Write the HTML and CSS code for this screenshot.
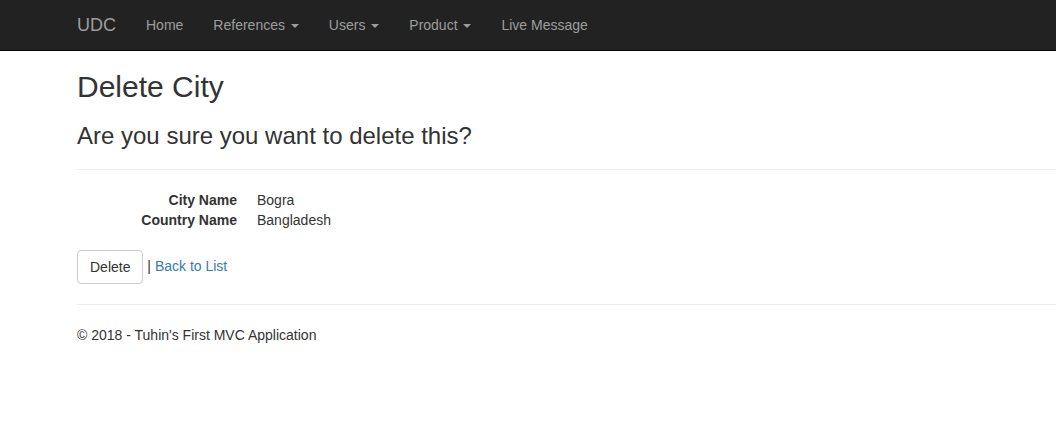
FILE: index.html
```html
<!DOCTYPE html>
<html>
<head>
<meta charset="utf-8">
<title>Delete - UDC</title>
<link rel="stylesheet" href="styles.css">
</head>
<body>
<div class="navbar">
  <div class="container nav-container">
    <a class="brand" href="#">UDC</a>
    <ul class="nav">
      <li><a href="#">Home</a></li>
      <li><a href="#">References <span class="caret"></span></a></li>
      <li><a href="#">Users <span class="caret"></span></a></li>
      <li><a href="#">Product <span class="caret"></span></a></li>
      <li><a href="#">Live Message</a></li>
    </ul>
  </div>
</div>
<div class="container body-content">
  <h2>Delete City</h2>
  <h3>Are you sure you want to delete this?</h3>
  <div>
    <hr>
    <dl class="dl-horizontal">
      <dt>City Name</dt>
      <dd>Bogra</dd>
      <dt>Country Name</dt>
      <dd>Bangladesh</dd>
    </dl>
    <form class="form-actions">
      <button type="button" class="btn">Delete</button> |
      <a href="#">Back to List</a>
    </form>
  </div>
  <hr>
  <footer>
    <p>&copy; 2018 - Tuhin's First MVC Application</p>
  </footer>
</div>
</body>
</html>
```
FILE: styles.css
```css
* { box-sizing: border-box; }
html { overflow: hidden; }
body {
  margin: 0;
  padding-top: 50px;
  padding-bottom: 20px;
  font-family: "Liberation Sans", Arial, Helvetica, sans-serif;
  font-size: 14px;
  line-height: 1.42857143;
  color: #333;
  background: #fff;
}
a { color: #337ab7; text-decoration: none; }
.container {
  margin-left: 62px;
  padding-left: 15px;
  padding-right: 0;
}
.navbar {
  position: fixed;
  top: 0;
  left: 0;
  right: 0;
  min-height: 50px;
  background: #222;
  border-bottom: 1px solid #080808;
  z-index: 10;
}
.nav-container {
  display: flex;
  align-items: flex-start;
}
.brand {
  display: block;
  height: 50px;
  padding: 15px 15px;
  margin-left: -15px;
  font-size: 18px;
  line-height: 20px;
  color: #9d9d9d;
}
.nav {
  display: flex;
  list-style: none;
  margin: 0;
  padding: 0;
}
.nav a {
  display: block;
  padding: 15px;
  line-height: 20px;
  color: #9d9d9d;
}
.caret {
  display: inline-block;
  width: 0;
  height: 0;
  margin-left: 2px;
  vertical-align: middle;
  border-top: 4px solid;
  border-right: 4px solid transparent;
  border-left: 4px solid transparent;
}
h2, h3 {
  font-family: inherit;
  font-weight: 500;
  line-height: 1.1;
  color: inherit;
  margin-top: 20px;
  margin-bottom: 10px;
}
h2 { font-size: 30px; }
h3 { font-size: 24px; }
hr {
  margin-top: 20px;
  margin-bottom: 20px;
  border: 0;
  border-top: 1px solid #eee;
  height: 0;
}
.dl-horizontal {
  margin-top: 0;
  margin-bottom: 20px;
}
.dl-horizontal dt {
  float: left;
  clear: left;
  width: 160px;
  text-align: right;
  font-weight: bold;
  line-height: 1.42857143;
  overflow: hidden;
  white-space: nowrap;
}
.dl-horizontal dd {
  margin-left: 180px;
  line-height: 1.42857143;
}
.dl-horizontal::after { content: ""; display: table; clear: both; }
.form-actions { margin: 0; }
.btn {
  display: inline-block;
  padding: 6px 12px;
  margin: 0;
  font-family: inherit;
  font-size: 14px;
  line-height: 1.42857143;
  color: #333;
  background: #fff;
  border: 1px solid #ccc;
  border-radius: 4px;
  vertical-align: middle;
  cursor: pointer;
}
footer p { margin: 0 0 10px; }
```
